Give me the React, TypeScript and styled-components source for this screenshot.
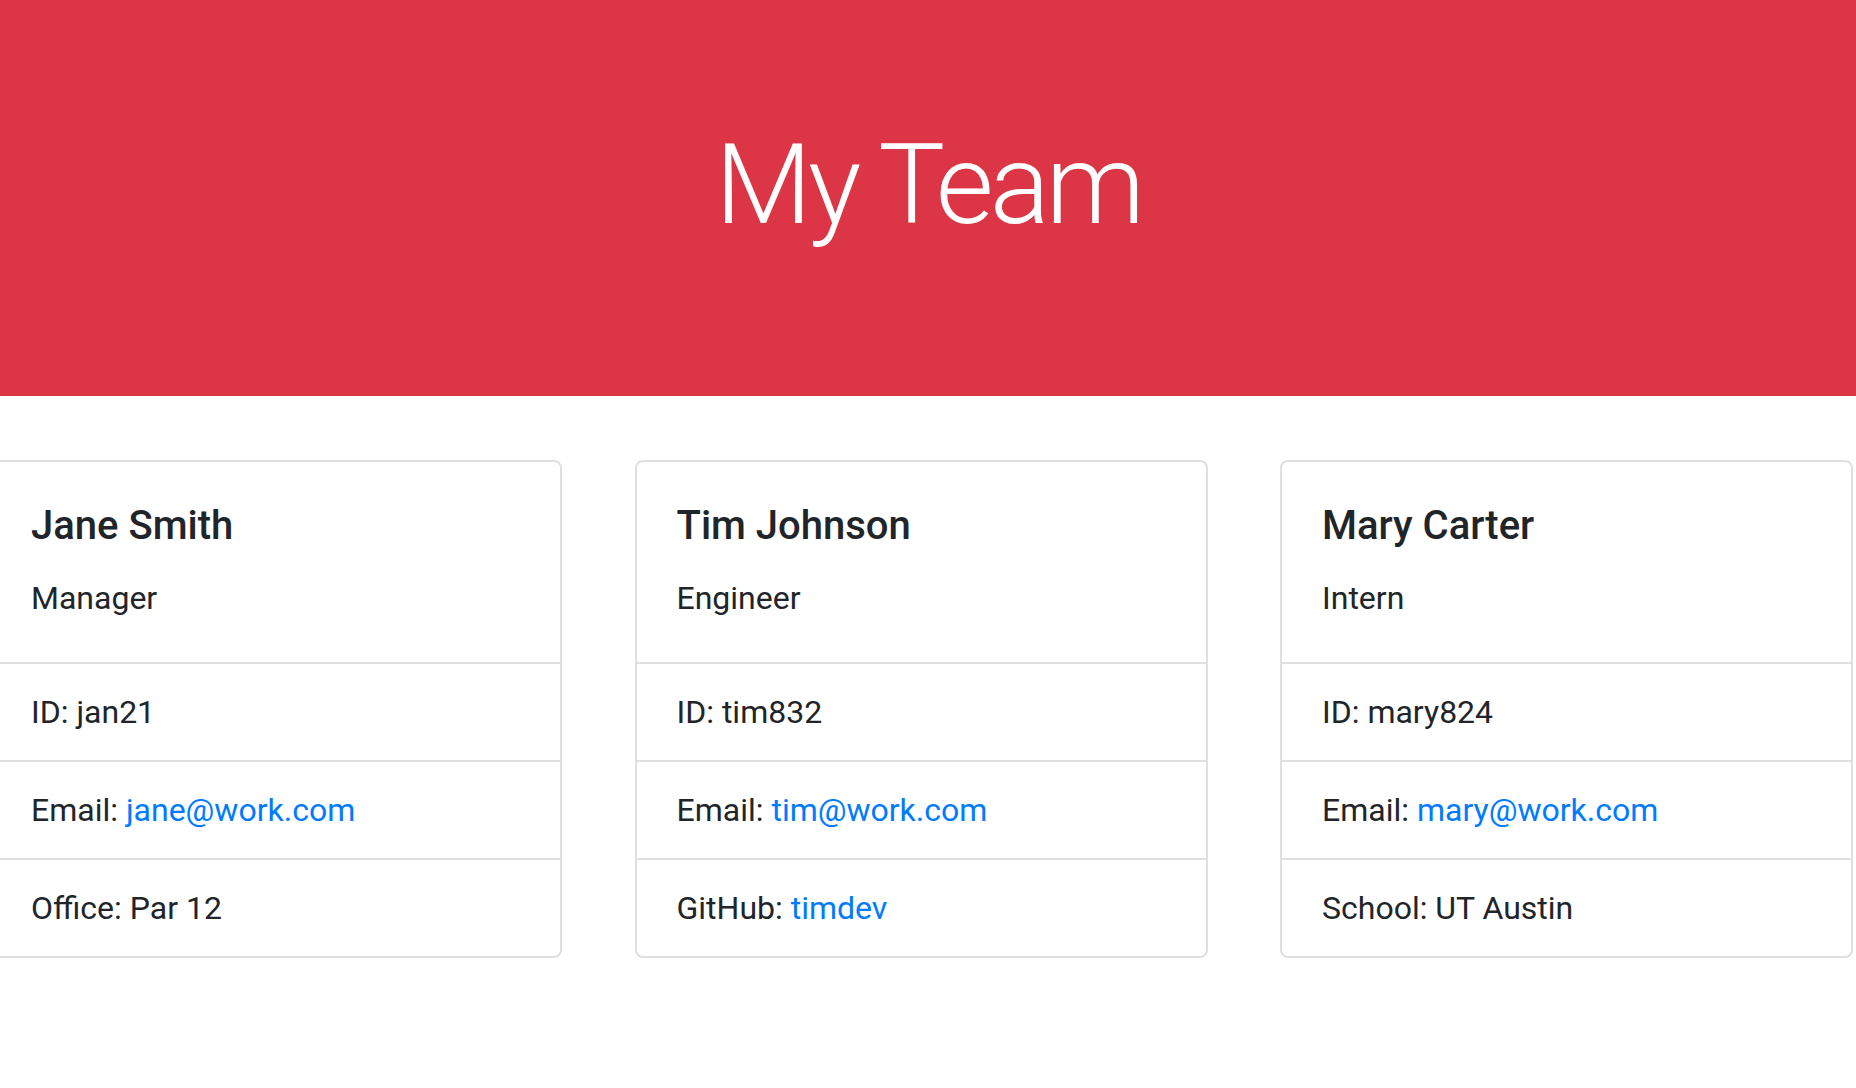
import React from "react";
import styled, { createGlobalStyle } from "styled-components";

const GlobalStyle = createGlobalStyle`
  html, body {
    margin: 0;
    padding: 0;
    background: #ffffff;
  }
  body {
    font-family: Roboto, "Liberation Sans", sans-serif;
    color: #212529;
    overflow-x: hidden;
  }
  * { box-sizing: border-box; }
`;

const Jumbotron = styled.header`
  background: #dc3545;
  height: 396px;
  padding-top: 118px;
  display: flex;
  justify-content: center;
  align-items: flex-start;
`;

const Title = styled.h1`
  margin: 0;
  color: #ffffff;
  font-family: Roboto, "Liberation Sans", sans-serif;
  font-size: 112px;
  line-height: 134px;
  font-weight: 300;
  letter-spacing: -4px;
`;

const CardRow = styled.main`
  display: flex;
  gap: 72.5px;
  margin: 64px 0 0 -11px;
`;

const Card = styled.section`
  flex: 0 0 573px;
  width: 573px;
  border: 2px solid #dfdfdf;
  border-radius: 8px;
  display: flex;
  flex-direction: column;
  background: #fff;
`;

const CardBody = styled.div`
  padding: 40px;
`;

const Name = styled.h5`
  margin: 0 0 24px;
  font-size: 40px;
  line-height: 48px;
  font-weight: 500;
  color: #212529;
`;

const Role = styled.p`
  margin: 0;
  font-size: 32px;
  line-height: 48px;
  font-weight: 400;
`;

const List = styled.ul`
  list-style: none;
  margin: 0;
  padding: 0;
`;

const Item = styled.li`
  border-top: 2px solid #dfdfdf;
  padding: 24px 40px;
  font-size: 32px;
  line-height: 48px;
  font-weight: 400;
  white-space: nowrap;
`;

const Link = styled.a`
  color: #007bff;
  text-decoration: none;
`;

type Member = {
  name: string;
  role: string;
  id: string;
  email: string;
  extraLabel: string;
  extraValue: string;
  extraLink?: boolean;
};

const team: Member[] = [
  { name: "Jane Smith", role: "Manager", id: "jan21", email: "jane@work.com", extraLabel: "Office", extraValue: "Par 12" },
  { name: "Tim Johnson", role: "Engineer", id: "tim832", email: "tim@work.com", extraLabel: "GitHub", extraValue: "timdev", extraLink: true },
  { name: "Mary Carter", role: "Intern", id: "mary824", email: "mary@work.com", extraLabel: "School", extraValue: "UT Austin" },
];

export default function App() {
  return (
    <>
      <GlobalStyle />
      <Jumbotron>
        <Title>My Team</Title>
      </Jumbotron>
      <CardRow>
        {team.map((m) => (
          <Card key={m.id}>
            <CardBody>
              <Name>{m.name}</Name>
              <Role>{m.role}</Role>
            </CardBody>
            <List>
              <Item>ID: {m.id}</Item>
              <Item>
                Email: <Link href={`mailto:${m.email}`}>{m.email}</Link>
              </Item>
              <Item>
                {m.extraLabel}:{" "}
                {m.extraLink ? <Link href="#">{m.extraValue}</Link> : m.extraValue}
              </Item>
            </List>
          </Card>
        ))}
      </CardRow>
    </>
  );
}
